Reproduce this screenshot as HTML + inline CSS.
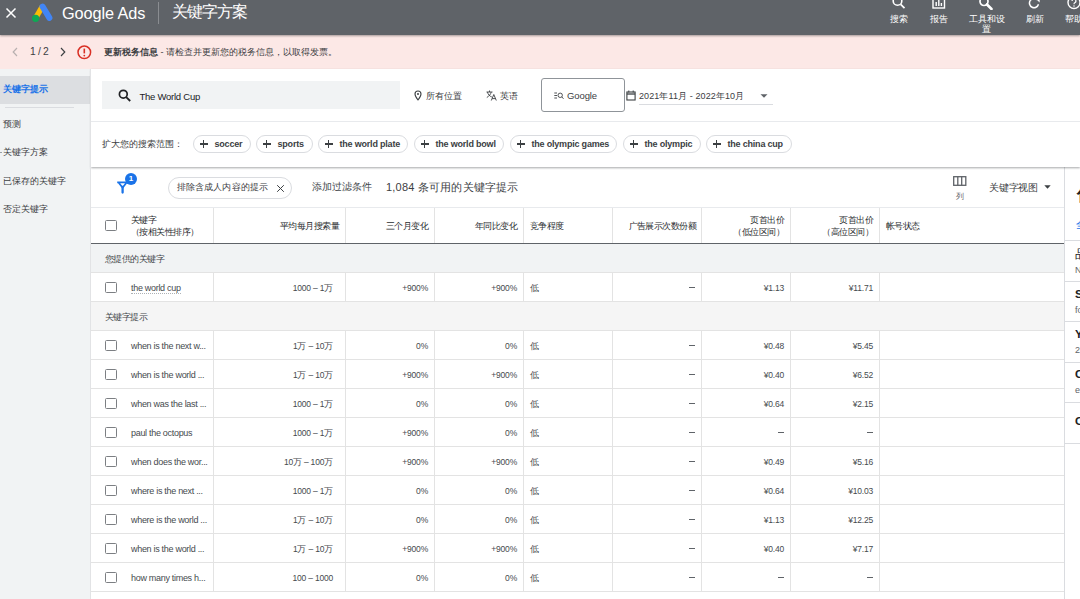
<!DOCTYPE html>
<html><head><meta charset="utf-8">
<style>
*{box-sizing:border-box;margin:0;padding:0}
html,body{width:1080px;height:599px;overflow:hidden;background:#fff;font-family:"Liberation Sans",sans-serif;color:#3c4043}
.a{position:absolute;white-space:nowrap}
#top{position:absolute;left:0;top:0;width:1080px;height:35px;background:#5f6368;box-shadow:0 1px 2px rgba(0,0,0,.35);z-index:5}
#banner{position:absolute;left:0;top:35px;width:1080px;height:34px;background:#fce8e6}
#side{position:absolute;left:0;top:69px;width:91px;height:530px;background:#f1f3f4}
#panel{position:absolute;left:91px;top:69px;width:989px;height:98px;background:#fff;box-shadow:0 1px 2px rgba(60,64,67,.45);z-index:3}
#main{position:absolute;left:91px;top:167px;width:973px;height:432px;background:#fff}
#rp{position:absolute;left:1064px;top:167px;width:16px;height:432px;background:#fff;border-left:1px solid #dadce0}
.chip{position:absolute;top:66px;height:18px;border:1px solid #dadce0;border-radius:9px;font-size:9px;font-weight:700;color:#3c4043;line-height:17px;padding-left:20.5px;letter-spacing:-0.2px}
.chip:before{content:"";position:absolute;left:5.5px;width:8.5px;height:1.2px;background:#3c4043;top:7.4px}
.chip:after{content:"";position:absolute;left:9.15px;top:3.5px;width:1.2px;height:8.5px;background:#3c4043}
.vl{position:absolute;width:1px;background:#e3e3e3}
.hl{position:absolute;height:1px;background:#e3e3e3;left:0;width:973px}
.cb{position:absolute;left:14px;width:11.5px;height:11px;border:1.9px solid #7c7f83;border-radius:1.5px}
.t{position:absolute;font-size:9px;white-space:nowrap;color:#464a4e}
.r{text-align:right}
.dash{display:inline-block;width:6px;height:1px;background:#5f6368;vertical-align:middle;margin-bottom:1px}
.row{position:absolute;left:0;width:973px;height:28px}
.row .t{top:9.5px;line-height:11px}
.kw{left:40px;letter-spacing:-0.3px}
.num{font-size:8.5px;letter-spacing:-0.2px}
.th{position:absolute;font-size:9px;line-height:11px;white-space:nowrap;color:#2a2d30;letter-spacing:-0.57px;font-weight:500}
.grp .th{font-weight:400;color:#45494d}
.grp{position:absolute;left:0;width:973px}

</style></head><body>

<!-- top bar -->
<div id="top">
  <svg class="a" style="left:5px;top:7px" width="12" height="12" viewBox="0 0 12 12"><path d="M1.5 1.5L10.5 10.5M10.5 1.5L1.5 10.5" stroke="#fff" stroke-width="1.5"/></svg>
  <svg class="a" style="left:31px;top:2px" width="24" height="22" viewBox="0 0 24 22">
    <path d="M4.6 16.2 L11.2 4.6" stroke="#fbbc04" stroke-width="5.4" stroke-linecap="butt"/>
    <path d="M11.6 4.6 L18.4 15.9" stroke="#4285f4" stroke-width="6" stroke-linecap="round"/>
    <circle cx="4.6" cy="16.3" r="3.6" fill="#0fa854"/>
  </svg>
  <div class="a" style="left:62px;top:4px;font-size:16.3px;color:#fff;line-height:18px;letter-spacing:-0.1px">Google Ads</div>
  <div class="a" style="left:158px;top:2px;width:1px;height:22px;background:#8a8d91"></div>
  <div class="a" style="left:171.5px;top:3px;font-size:16px;color:#fff;line-height:18px;letter-spacing:-0.8px">关键字方案</div>

  <!-- right icons -->
  <svg class="a" style="left:891px;top:-2px" width="16" height="12" viewBox="0 0 16 12"><circle cx="6.5" cy="3" r="4.3" stroke="#fff" stroke-width="1.6" fill="none"/><path d="M9.7 6.3L13.5 10.2" stroke="#fff" stroke-width="1.7"/></svg>
  <svg class="a" style="left:932px;top:-3px" width="14" height="12" viewBox="0 0 14 12"><rect x="1" y="0" width="11.5" height="11" stroke="#fff" stroke-width="1.4" fill="none"/><path d="M4.2 9V5M6.8 9V3M9.4 9V6" stroke="#fff" stroke-width="1.4"/></svg>
  <svg class="a" style="left:978px;top:-2px" width="20" height="12" viewBox="0 0 20 12"><circle cx="6" cy="3.5" r="4" stroke="#fff" stroke-width="1.7" fill="none"/><path d="M9 6.5L13.5 11" stroke="#fff" stroke-width="2.6" stroke-linecap="round"/></svg>
  <svg class="a" style="left:1027px;top:-2px" width="16" height="12" viewBox="0 0 16 12"><path d="M11.5 6.3 A4.6 4.6 0 1 1 10.3 1.8" stroke="#fff" stroke-width="1.5" fill="none"/><path d="M8.5 0.5 L12.6 0.5 L12.6 4.6Z" fill="#fff"/></svg>
  <svg class="a" style="left:1066px;top:-2px" width="16" height="13" viewBox="0 0 16 13"><circle cx="8" cy="4.5" r="6" stroke="#fff" stroke-width="1.4" fill="none"/><path d="M6.1 3a1.9 1.9 0 1 1 2.7 1.7c-.6.3-.8.7-.8 1.5" stroke="#fff" stroke-width="1.2" fill="none"/><circle cx="8" cy="7.9" r="0.75" fill="#fff"/></svg>
  <div class="a" style="left:890px;top:14px;font-size:9px;color:#fff;line-height:11px;font-weight:500">搜索</div>
  <div class="a" style="left:930px;top:14px;font-size:9px;color:#fff;line-height:11px;font-weight:500">报告</div>
  <div class="a" style="left:969px;top:14px;font-size:9px;color:#fff;line-height:11px;font-weight:500">工具和设</div>
  <div class="a" style="left:982px;top:24px;font-size:9px;color:#fff;line-height:11px;font-weight:500">置</div>
  <div class="a" style="left:1026px;top:14px;font-size:9px;color:#fff;line-height:11px;font-weight:500">刷新</div>
  <div class="a" style="left:1065px;top:14px;font-size:9px;color:#fff;line-height:11px;font-weight:500">帮助</div>
</div>

<!-- banner -->
<div id="banner">
  <svg class="a" style="left:11px;top:12px" width="8" height="10" viewBox="0 0 8 10"><path d="M6 1L2.2 5L6 9" stroke="#b8b0b0" stroke-width="1.2" fill="none"/></svg>
  <div class="a" style="left:30px;top:10.5px;font-size:10.3px;line-height:12px;color:#3c4043;letter-spacing:-0.35px">1 / 2</div>
  <svg class="a" style="left:59px;top:12px" width="8" height="10" viewBox="0 0 8 10"><path d="M2 1L5.8 5L2 9" stroke="#3c4043" stroke-width="1.15" fill="none"/></svg>
  <svg class="a" style="left:76.5px;top:10px" width="15" height="15" viewBox="0 0 15 15"><circle cx="7.3" cy="7.3" r="6.3" stroke="#d93025" stroke-width="1.5" fill="none"/><path d="M7.3 3.6V8.4" stroke="#d93025" stroke-width="1.6"/><circle cx="7.3" cy="10.6" r="0.9" fill="#d93025"/></svg>
  <div class="a" style="left:104px;top:11.5px;font-size:9px;line-height:11px;color:#3c4043"><b style="font-weight:600">更新税务信息</b> - 请检查并更新您的税务信息，以取得发票。</div>
</div>

<!-- sidebar -->
<div id="side">
  <div class="a" style="left:0;top:6.5px;width:91px;height:28.5px;background:#dcdee1"></div>
  <div class="a" style="left:3px;top:15px;font-size:9px;line-height:11px;color:#1a73e8;font-weight:600">关键字提示</div>
  <div class="a" style="left:5px;top:38px;width:69px;height:1px;background:#dadce0"></div>
  <div class="a" style="left:3px;top:50px;font-size:9px;line-height:11px;color:#3c4043">预测</div>
  <div class="a" style="left:0;top:83px;width:2px;height:1px;background:#9aa0a6"></div>
  <div class="a" style="left:3px;top:78px;font-size:9px;line-height:11px;color:#3c4043">关键字方案</div>
  <div class="a" style="left:3px;top:107px;font-size:9px;line-height:11px;color:#3c4043">已保存的关键字</div>
  <div class="a" style="left:3px;top:135px;font-size:9px;line-height:11px;color:#3c4043">否定关键字</div>
</div>

<!-- search panel -->
<div id="panel">
  <div class="a" style="left:11px;top:12px;width:298px;height:28px;background:#f1f3f4"></div>
  <svg class="a" style="left:27px;top:20px" width="14" height="13" viewBox="0 0 14 13"><circle cx="5.3" cy="5.2" r="3.9" stroke="#202124" stroke-width="1.7" fill="none"/><path d="M8.2 8.1L12.2 12" stroke="#202124" stroke-width="1.9"/></svg>
  <div class="a" style="left:48.5px;top:21.5px;font-size:9.5px;line-height:12px;color:#202124;letter-spacing:-0.25px">The World Cup</div>
  <svg class="a" style="left:323px;top:21px" width="8" height="11" viewBox="0 0 8 11"><path d="M4 10C4 10 7 6.3 7 4A3 3 0 0 0 1 4C1 6.3 4 10 4 10Z" stroke="#3c4043" stroke-width="1.1" fill="none"/><circle cx="4" cy="4" r="1" fill="#3c4043"/></svg>
  <div class="a" style="left:335px;top:22px;font-size:9px;line-height:11px;color:#3c4043">所有位置</div>
  <svg class="a" style="left:395px;top:21px" width="11" height="11" viewBox="0 0 11 11"><path d="M0.5 2H6.5M3.5 0.5V2M1.5 2C2 4.5 3.5 6 5.8 7M5.2 2C4.8 4 3.2 6.2 0.8 7.5" stroke="#3c4043" stroke-width="0.9" fill="none"/><path d="M5.3 10.5L7.8 4.5L10.3 10.5M6.2 8.6H9.4" stroke="#3c4043" stroke-width="0.9" fill="none"/></svg>
  <div class="a" style="left:409px;top:22px;font-size:9px;line-height:11px;color:#3c4043">英语</div>
  <div class="a" style="left:449.5px;top:9px;width:84.5px;height:34px;border:1px solid #8f9499;border-radius:3px"></div>
  <svg class="a" style="left:462.5px;top:23px" width="10" height="8" viewBox="0 0 10 8"><path d="M0.3 1H3M0.3 3.5H3M0.3 6H3" stroke="#3c4043" stroke-width="0.9"/><circle cx="6.2" cy="3.3" r="2.2" stroke="#3c4043" stroke-width="0.9" fill="none"/><path d="M7.8 4.9L9.5 6.8" stroke="#3c4043" stroke-width="0.9"/></svg>
  <div class="a" style="left:476px;top:21px;font-size:9.5px;line-height:11px;color:#3c4043;letter-spacing:-0.1px">Google</div>
  <svg class="a" style="left:535px;top:21px" width="10" height="11" viewBox="0 0 10 11"><rect x="0.9" y="2" width="8.2" height="8" stroke="#3c4043" stroke-width="1.1" fill="none"/><path d="M0.9 4H9.1" stroke="#3c4043" stroke-width="1.3"/><path d="M2.8 0.5V2.5M7.2 0.5V2.5" stroke="#3c4043" stroke-width="1"/></svg>
  <div class="a" style="left:548px;top:22px;font-size:9px;line-height:11px;color:#3c4043;letter-spacing:0.1px">2021年11月 - 2022年10月</div>
  <svg class="a" style="left:669px;top:25px" width="8" height="4" viewBox="0 0 8 4"><path d="M0.5 0.3H7.5L4 3.8Z" fill="#5f6368"/></svg>
  <div class="a" style="left:548px;top:35px;width:134px;height:1px;background:#dadce0"></div>

  <div class="a" style="left:0;top:52px;width:989px;height:1px;background:#e8eaed"></div>
  <div class="a" style="left:11px;top:70px;font-size:9px;line-height:11px;color:#3c4043">扩大您的搜索范围：</div>
  <div class="chip" style="left:102px;width:58px">soccer</div>
  <div class="chip" style="left:165px;width:57px">sports</div>
  <div class="chip" style="left:227px;width:90px">the world plate</div>
  <div class="chip" style="left:323px;width:90px">the world bowl</div>
  <div class="chip" style="left:419px;width:107px">the olympic games</div>
  <div class="chip" style="left:532px;width:78px">the olympic</div>
  <div class="chip" style="left:615px;width:86px">the china cup</div>
</div>

<!-- main -->
<div id="filt" style="position:absolute;left:91px;top:167px;width:973px;height:40px;z-index:2">
  <svg class="a" style="left:24.5px;top:13px" width="13" height="14" viewBox="0 0 13 14"><path d="M1.2 2.3H11.5M2.3 2.3L6.6 7.6M10.9 2.3L6.6 7.6" stroke="#1a73e8" stroke-width="1.7" fill="none"/><path d="M6.6 7V12.6" stroke="#1a73e8" stroke-width="2.3" stroke-linecap="round"/></svg>
  <div class="a" style="left:34px;top:5.5px;width:12px;height:12px;border-radius:6px;background:#1a73e8;color:#fff;font-size:8px;font-weight:700;line-height:12px;text-align:center">1</div>
  <div class="a" style="left:76.5px;top:9.5px;width:124px;height:22px;border:1px solid #dadce0;border-radius:11px"></div>
  <div class="a" style="left:86px;top:15px;font-size:9px;line-height:11px;color:#3c4043;letter-spacing:0.1px">排除含成人内容的提示</div>
  <svg class="a" style="left:184.5px;top:16.5px" width="9" height="9" viewBox="0 0 9 9"><path d="M1.2 1.2L7.8 7.8M7.8 1.2L1.2 7.8" stroke="#3c4043" stroke-width="1"/></svg>
  <div class="a" style="left:220.5px;top:13.8px;font-size:10px;line-height:12px;color:#45494d">添加过滤条件</div>
  <div class="a" style="left:295px;top:13.5px;font-size:11px;line-height:13px;color:#3c4043;letter-spacing:0.2px">1,084 条可用的关键字提示</div>
  <svg class="a" style="left:862px;top:9px" width="14" height="10" viewBox="0 0 14 10"><rect x="0.7" y="0.7" width="12.1" height="8.6" stroke="#5f6368" stroke-width="1.3" fill="none"/><path d="M4.8 0.7V9.3M8.7 0.7V9.3" stroke="#5f6368" stroke-width="1.3"/></svg>
  <div class="a" style="left:865px;top:25px;font-size:8px;line-height:10px;color:#5f6368">列</div>
  <div class="a" style="left:898px;top:14.5px;font-size:10px;line-height:12px;color:#3c4043;letter-spacing:-0.2px">关键字视图</div>
  <svg class="a" style="left:952.5px;top:18px" width="7" height="4" viewBox="0 0 7 4"><path d="M0.3 0.3H6.7L3.5 3.7Z" fill="#3c4043"/></svg>
</div>
<div id="main">
<div class="hl" style="top:40px;background:#e8eaed"></div>
<div class="vl" style="left:122px;top:41px;height:35px"></div>
<div class="vl" style="left:254px;top:41px;height:35px"></div>
<div class="vl" style="left:343px;top:41px;height:35px"></div>
<div class="vl" style="left:432px;top:41px;height:35px"></div>
<div class="vl" style="left:521px;top:41px;height:35px"></div>
<div class="vl" style="left:610px;top:41px;height:35px"></div>
<div class="vl" style="left:699px;top:41px;height:35px"></div>
<div class="vl" style="left:788px;top:41px;height:35px"></div>
<div class="cb" style="top:53px"></div>
<div class="th" style="left:40px;top:48px">关键字</div>
<div class="th" style="left:40px;top:60px">（按相关性排序）</div>
<div class="th r" style="right:725px;top:54px">平均每月搜索量</div>
<div class="th r" style="right:636px;top:54px">三个月变化</div>
<div class="th r" style="right:547px;top:54px">年同比变化</div>
<div class="th" style="left:439px;top:54px">竞争程度</div>
<div class="th r" style="right:368px;top:54px">广告展示次数份额</div>
<div class="th r" style="right:280px;top:48px">页首出价</div>
<div class="th r" style="right:280px;top:60px">（低位区间）</div>
<div class="th r" style="right:191px;top:48px">页首出价</div>
<div class="th r" style="right:191px;top:60px">（高位区间）</div>
<div class="th" style="left:795px;top:54px">帐号状态</div>
<div class="hl" style="top:76px;height:1.5px;background:#5f6368"></div>
<div class="grp" style="top:77px;height:28px;background:#f1f3f4"><div class="th" style="left:14px;top:10px">您提供的关键字</div></div>
<div class="hl" style="top:105px"></div>
<div class="row" style="top:106px"><div class="cb" style="top:8.5px"></div><div class="t kw"><span style="border-bottom:1px dotted #aeb2b6;padding-bottom:0">the world cup</span></div><div class="t r num" style="right:731px">1000 – 1万</div><div class="t r num" style="right:636px">+900%</div><div class="t r num" style="right:547px">+900%</div><div class="t cjk" style="left:439px">低</div><div class="t r num" style="right:369px"><span class="dash"></span></div><div class="t r num" style="right:280px">¥1.13</div><div class="t r num" style="right:191px">¥11.71</div><div class="vl" style="left:122px;top:0;height:29px"></div><div class="vl" style="left:254px;top:0;height:29px"></div><div class="vl" style="left:343px;top:0;height:29px"></div><div class="vl" style="left:432px;top:0;height:29px"></div><div class="vl" style="left:521px;top:0;height:29px"></div><div class="vl" style="left:610px;top:0;height:29px"></div><div class="vl" style="left:699px;top:0;height:29px"></div><div class="vl" style="left:788px;top:0;height:29px"></div></div>
<div class="hl" style="top:134px"></div>
<div class="grp" style="top:135px;height:28px;background:#f5f5f5"><div class="th" style="left:14px;top:10px">关键字提示</div></div>
<div class="hl" style="top:163px"></div>
<div class="row" style="top:164px"><div class="cb" style="top:8.5px"></div><div class="t kw"><span>when is the next w...</span></div><div class="t r num" style="right:731px">1万 – 10万</div><div class="t r num" style="right:636px">0%</div><div class="t r num" style="right:547px">0%</div><div class="t cjk" style="left:439px">低</div><div class="t r num" style="right:369px"><span class="dash"></span></div><div class="t r num" style="right:280px">¥0.48</div><div class="t r num" style="right:191px">¥5.45</div><div class="vl" style="left:122px;top:0;height:29px"></div><div class="vl" style="left:254px;top:0;height:29px"></div><div class="vl" style="left:343px;top:0;height:29px"></div><div class="vl" style="left:432px;top:0;height:29px"></div><div class="vl" style="left:521px;top:0;height:29px"></div><div class="vl" style="left:610px;top:0;height:29px"></div><div class="vl" style="left:699px;top:0;height:29px"></div><div class="vl" style="left:788px;top:0;height:29px"></div></div>
<div class="hl" style="top:192px"></div>
<div class="row" style="top:193px"><div class="cb" style="top:8.5px"></div><div class="t kw"><span>when is the world ...</span></div><div class="t r num" style="right:731px">1万 – 10万</div><div class="t r num" style="right:636px">+900%</div><div class="t r num" style="right:547px">+900%</div><div class="t cjk" style="left:439px">低</div><div class="t r num" style="right:369px"><span class="dash"></span></div><div class="t r num" style="right:280px">¥0.40</div><div class="t r num" style="right:191px">¥6.52</div><div class="vl" style="left:122px;top:0;height:29px"></div><div class="vl" style="left:254px;top:0;height:29px"></div><div class="vl" style="left:343px;top:0;height:29px"></div><div class="vl" style="left:432px;top:0;height:29px"></div><div class="vl" style="left:521px;top:0;height:29px"></div><div class="vl" style="left:610px;top:0;height:29px"></div><div class="vl" style="left:699px;top:0;height:29px"></div><div class="vl" style="left:788px;top:0;height:29px"></div></div>
<div class="hl" style="top:221px"></div>
<div class="row" style="top:222px"><div class="cb" style="top:8.5px"></div><div class="t kw"><span>when was the last ...</span></div><div class="t r num" style="right:731px">1000 – 1万</div><div class="t r num" style="right:636px">0%</div><div class="t r num" style="right:547px">0%</div><div class="t cjk" style="left:439px">低</div><div class="t r num" style="right:369px"><span class="dash"></span></div><div class="t r num" style="right:280px">¥0.64</div><div class="t r num" style="right:191px">¥2.15</div><div class="vl" style="left:122px;top:0;height:29px"></div><div class="vl" style="left:254px;top:0;height:29px"></div><div class="vl" style="left:343px;top:0;height:29px"></div><div class="vl" style="left:432px;top:0;height:29px"></div><div class="vl" style="left:521px;top:0;height:29px"></div><div class="vl" style="left:610px;top:0;height:29px"></div><div class="vl" style="left:699px;top:0;height:29px"></div><div class="vl" style="left:788px;top:0;height:29px"></div></div>
<div class="hl" style="top:250px"></div>
<div class="row" style="top:251px"><div class="cb" style="top:8.5px"></div><div class="t kw"><span>paul the octopus</span></div><div class="t r num" style="right:731px">1000 – 1万</div><div class="t r num" style="right:636px">+900%</div><div class="t r num" style="right:547px">0%</div><div class="t cjk" style="left:439px">低</div><div class="t r num" style="right:369px"><span class="dash"></span></div><div class="t r num" style="right:280px"><span class="dash"></span></div><div class="t r num" style="right:191px"><span class="dash"></span></div><div class="vl" style="left:122px;top:0;height:29px"></div><div class="vl" style="left:254px;top:0;height:29px"></div><div class="vl" style="left:343px;top:0;height:29px"></div><div class="vl" style="left:432px;top:0;height:29px"></div><div class="vl" style="left:521px;top:0;height:29px"></div><div class="vl" style="left:610px;top:0;height:29px"></div><div class="vl" style="left:699px;top:0;height:29px"></div><div class="vl" style="left:788px;top:0;height:29px"></div></div>
<div class="hl" style="top:279px"></div>
<div class="row" style="top:280px"><div class="cb" style="top:8.5px"></div><div class="t kw"><span>when does the wor...</span></div><div class="t r num" style="right:731px">10万 – 100万</div><div class="t r num" style="right:636px">+900%</div><div class="t r num" style="right:547px">+900%</div><div class="t cjk" style="left:439px">低</div><div class="t r num" style="right:369px"><span class="dash"></span></div><div class="t r num" style="right:280px">¥0.49</div><div class="t r num" style="right:191px">¥5.16</div><div class="vl" style="left:122px;top:0;height:29px"></div><div class="vl" style="left:254px;top:0;height:29px"></div><div class="vl" style="left:343px;top:0;height:29px"></div><div class="vl" style="left:432px;top:0;height:29px"></div><div class="vl" style="left:521px;top:0;height:29px"></div><div class="vl" style="left:610px;top:0;height:29px"></div><div class="vl" style="left:699px;top:0;height:29px"></div><div class="vl" style="left:788px;top:0;height:29px"></div></div>
<div class="hl" style="top:308px"></div>
<div class="row" style="top:309px"><div class="cb" style="top:8.5px"></div><div class="t kw"><span>where is the next ...</span></div><div class="t r num" style="right:731px">1000 – 1万</div><div class="t r num" style="right:636px">0%</div><div class="t r num" style="right:547px">0%</div><div class="t cjk" style="left:439px">低</div><div class="t r num" style="right:369px"><span class="dash"></span></div><div class="t r num" style="right:280px">¥0.64</div><div class="t r num" style="right:191px">¥10.03</div><div class="vl" style="left:122px;top:0;height:29px"></div><div class="vl" style="left:254px;top:0;height:29px"></div><div class="vl" style="left:343px;top:0;height:29px"></div><div class="vl" style="left:432px;top:0;height:29px"></div><div class="vl" style="left:521px;top:0;height:29px"></div><div class="vl" style="left:610px;top:0;height:29px"></div><div class="vl" style="left:699px;top:0;height:29px"></div><div class="vl" style="left:788px;top:0;height:29px"></div></div>
<div class="hl" style="top:337px"></div>
<div class="row" style="top:338px"><div class="cb" style="top:8.5px"></div><div class="t kw"><span>where is the world ...</span></div><div class="t r num" style="right:731px">1万 – 10万</div><div class="t r num" style="right:636px">0%</div><div class="t r num" style="right:547px">0%</div><div class="t cjk" style="left:439px">低</div><div class="t r num" style="right:369px"><span class="dash"></span></div><div class="t r num" style="right:280px">¥1.13</div><div class="t r num" style="right:191px">¥12.25</div><div class="vl" style="left:122px;top:0;height:29px"></div><div class="vl" style="left:254px;top:0;height:29px"></div><div class="vl" style="left:343px;top:0;height:29px"></div><div class="vl" style="left:432px;top:0;height:29px"></div><div class="vl" style="left:521px;top:0;height:29px"></div><div class="vl" style="left:610px;top:0;height:29px"></div><div class="vl" style="left:699px;top:0;height:29px"></div><div class="vl" style="left:788px;top:0;height:29px"></div></div>
<div class="hl" style="top:366px"></div>
<div class="row" style="top:367px"><div class="cb" style="top:8.5px"></div><div class="t kw"><span>when is the world ...</span></div><div class="t r num" style="right:731px">1万 – 10万</div><div class="t r num" style="right:636px">+900%</div><div class="t r num" style="right:547px">+900%</div><div class="t cjk" style="left:439px">低</div><div class="t r num" style="right:369px"><span class="dash"></span></div><div class="t r num" style="right:280px">¥0.40</div><div class="t r num" style="right:191px">¥7.17</div><div class="vl" style="left:122px;top:0;height:29px"></div><div class="vl" style="left:254px;top:0;height:29px"></div><div class="vl" style="left:343px;top:0;height:29px"></div><div class="vl" style="left:432px;top:0;height:29px"></div><div class="vl" style="left:521px;top:0;height:29px"></div><div class="vl" style="left:610px;top:0;height:29px"></div><div class="vl" style="left:699px;top:0;height:29px"></div><div class="vl" style="left:788px;top:0;height:29px"></div></div>
<div class="hl" style="top:395px"></div>
<div class="row" style="top:396px"><div class="cb" style="top:8.5px"></div><div class="t kw"><span>how many times h...</span></div><div class="t r num" style="right:731px">100 – 1000</div><div class="t r num" style="right:636px">0%</div><div class="t r num" style="right:547px">0%</div><div class="t cjk" style="left:439px">低</div><div class="t r num" style="right:369px"><span class="dash"></span></div><div class="t r num" style="right:280px"><span class="dash"></span></div><div class="t r num" style="right:191px"><span class="dash"></span></div><div class="vl" style="left:122px;top:0;height:29px"></div><div class="vl" style="left:254px;top:0;height:29px"></div><div class="vl" style="left:343px;top:0;height:29px"></div><div class="vl" style="left:432px;top:0;height:29px"></div><div class="vl" style="left:521px;top:0;height:29px"></div><div class="vl" style="left:610px;top:0;height:29px"></div><div class="vl" style="left:699px;top:0;height:29px"></div><div class="vl" style="left:788px;top:0;height:29px"></div></div>
<div class="hl" style="top:424px"></div>
</div>

<div class="a" style="left:90px;top:69px;width:1px;height:530px;background:#e2e3e5;z-index:4"></div>
<div id="rp">
  <div class="a" style="left:11.5px;top:17px;font-size:18px;line-height:20px;color:#202124;font-weight:600">优化</div>
  <div class="a" style="left:11px;top:52px;font-size:10px;line-height:12px;color:#1a73e8">全部</div>
  <div class="a" style="left:0;top:73px;width:16px;height:1px;background:#dadce0"></div>
  <div class="a" style="left:10px;top:81px;font-size:12px;line-height:13px;color:#202124;font-weight:400">品牌</div>
  <div class="a" style="left:10px;top:98px;font-size:9px;line-height:10px;color:#5f6368">Nike</div>
  <div class="a" style="left:0;top:114px;width:16px;height:1px;background:#dadce0"></div>
  <div class="a" style="left:10px;top:121px;font-size:11.5px;line-height:13px;color:#202124;font-weight:700">Sport</div>
  <div class="a" style="left:10px;top:138px;font-size:9px;line-height:10px;color:#5f6368">football</div>
  <div class="a" style="left:0;top:154px;width:16px;height:1px;background:#dadce0"></div>
  <div class="a" style="left:10px;top:161px;font-size:11.5px;line-height:13px;color:#202124;font-weight:700">Year</div>
  <div class="a" style="left:10px;top:178px;font-size:9px;line-height:10px;color:#5f6368">2022</div>
  <div class="a" style="left:0;top:195px;width:16px;height:1px;background:#dadce0"></div>
  <div class="a" style="left:10px;top:201px;font-size:11.5px;line-height:13px;color:#202124;font-weight:700">Country</div>
  <div class="a" style="left:10px;top:218px;font-size:9px;line-height:10px;color:#5f6368">england</div>
  <div class="a" style="left:0;top:235px;width:16px;height:1px;background:#dadce0"></div>
  <div class="a" style="left:10px;top:248px;font-size:11.5px;line-height:13px;color:#202124;font-weight:700">Others</div>
  <div class="a" style="left:0;top:276px;width:16px;height:1px;background:#dadce0"></div>
</div>

</body></html>
